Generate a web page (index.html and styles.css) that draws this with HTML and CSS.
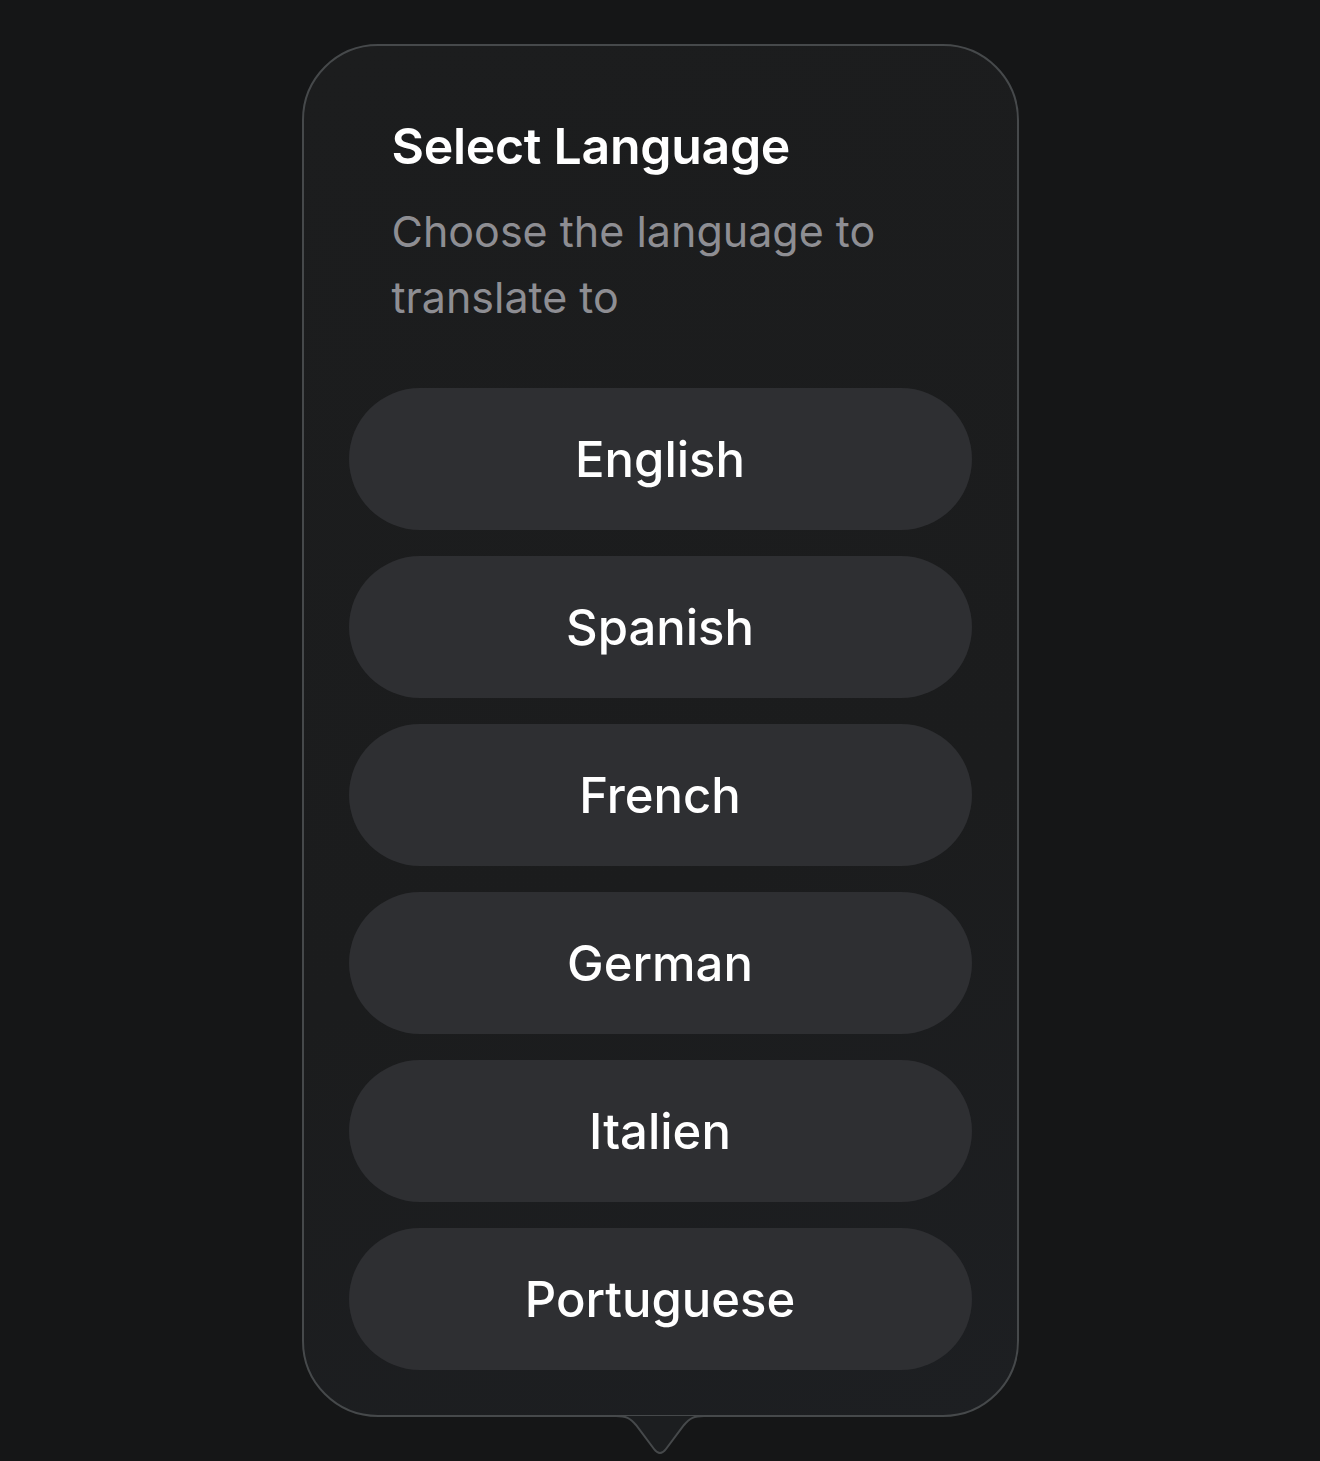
FILE: index.html
```html
<!DOCTYPE html>
<html lang="en">
<head>
    <meta charset="UTF-8">
    <meta name="viewport" content="width=device-width, initial-scale=1.0">
    <title>Select Language</title>
    <link rel="stylesheet" href="styles.css">
</head>
<body>
    <div class="popover">
        <div class="popover-header">
            <h1 class="popover-title">Select Language</h1>
            <p class="popover-subtitle">Choose the language to translate to</p>
        </div>

        <div class="language-list">
            <button class="language-btn">English</button>
            <button class="language-btn">Spanish</button>
            <button class="language-btn">French</button>
            <button class="language-btn">German</button>
            <button class="language-btn">Italien</button>
            <button class="language-btn">Portuguese</button>
        </div>

        <!-- arrow pointing down at the anchor -->
        <svg class="popover-arrow" width="92" height="44" viewBox="0 0 92 44">
            <path d="M-6 1 L2 1 C12 1 16 3 22 10 L40 34 Q46 42 52 34 L70 10 C76 3 80 1 90 1 L98 1" />
        </svg>
    </div>
</body>
</html>
```

FILE: styles.css
```css
:root {
    --page-bg: #151617;
    --card-bg: #1c1d1e;
    --card-border: #46494b;
    --btn-bg: #2e2f32;
    --text: #ffffff;
    --text-muted: #8e8e93;
    --font-ui: 'Inter', 'Noto Sans', sans-serif;
}
body {
    margin: 0;
    padding: 44px 0 0;
    background: var(--page-bg);
    font-family: var(--font-ui);
    color: var(--text);
    display: flex;
    justify-content: center;
    min-height: 100vh;
    box-sizing: border-box;
}
.popover {
    position: relative;
    width: 717px;
    box-sizing: border-box;
    padding: 72px 45px 46px;
    border: 2px solid var(--card-border);
    border-radius: 76px;
    background: linear-gradient(160deg, #1c1d1e 0%, #1b1c1d 60%, #1d1f22 100%);
    height: 1373px;
}
.popover-header {
    padding: 0 43px;
    margin-bottom: 58px;
}
.popover-title {
    margin: 0;
    font-size: 50px;
    font-weight: 600;
    line-height: 56px;
    letter-spacing: -0.3px;
}
.popover-subtitle {
    margin: 24px 0 0;
    font-size: 43px;
    line-height: 66px;
    color: var(--text-muted);
    max-width: 520px;
}
.language-list {
    display: flex;
    flex-direction: column;
    gap: 26px;
}
.language-btn {
    height: 142px;
    border: none;
    border-radius: 71px;
    background: var(--btn-bg);
    color: var(--text);
    font-family: var(--font-ui);
    font-size: 49px;
    font-weight: 500;
    cursor: pointer;
}
.popover-arrow {
    position: absolute;
    left: 50%;
    bottom: -44px;
    transform: translateX(-50%);
    overflow: visible;
}
.popover-arrow path {
    fill: #1c1e20;
    stroke: var(--card-border);
    stroke-width: 2;
}
```
